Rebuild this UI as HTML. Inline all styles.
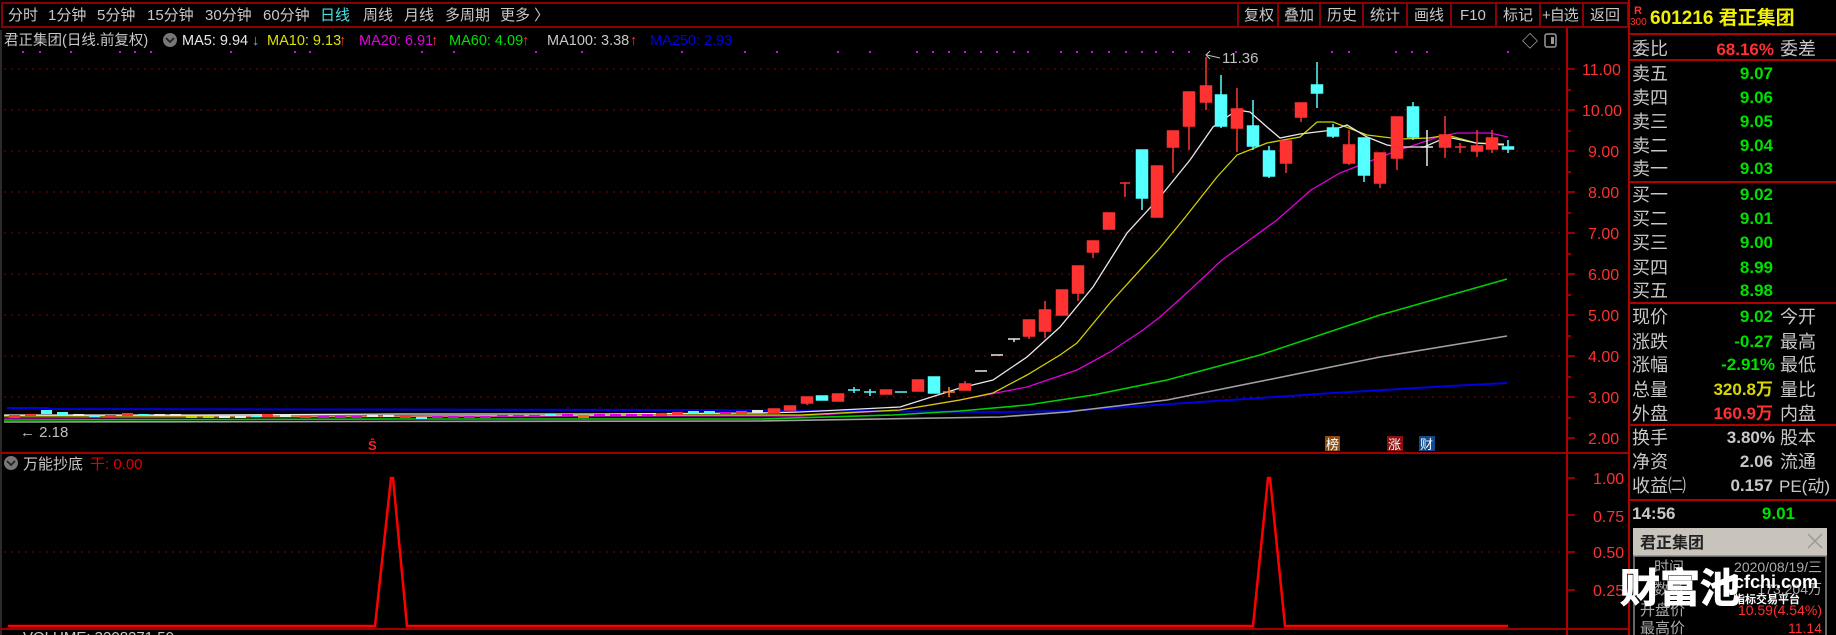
<!DOCTYPE html>
<html><head><meta charset="utf-8"><style>
html,body{margin:0;padding:0;background:#000;width:1836px;height:635px;overflow:hidden}
svg text{font-family:"Liberation Sans","Noto Sans CJK SC",sans-serif}
</style></head><body>
<svg width="1836" height="635" viewBox="0 0 1836 635" xmlns="http://www.w3.org/2000/svg">
<rect width="1836" height="635" fill="#000"/>
<rect x="2" y="3" width="1626" height="24" fill="none" stroke="#8b0000" stroke-width="2"/>
<g font-size="15" fill="#c8c8c8">
<text x="8" y="20">分时</text><text x="48" y="20">1分钟</text><text x="97" y="20">5分钟</text><text x="147" y="20">15分钟</text><text x="205" y="20">30分钟</text><text x="263" y="20">60分钟</text><text x="320" y="20" fill="#4ae0e0">日线</text><text x="363" y="20">周线</text><text x="404" y="20">月线</text><text x="445" y="20">多周期</text><text x="500" y="20">更多 〉</text>
</g>
<g stroke="#8b0000" stroke-width="2"><line x1="1238" y1="3" x2="1238" y2="27"/><line x1="1278" y1="3" x2="1278" y2="27"/><line x1="1320" y1="3" x2="1320" y2="27"/><line x1="1363" y1="3" x2="1363" y2="27"/><line x1="1407" y1="3" x2="1407" y2="27"/><line x1="1451" y1="3" x2="1451" y2="27"/><line x1="1496" y1="3" x2="1496" y2="27"/><line x1="1540" y1="3" x2="1540" y2="27"/><line x1="1583" y1="3" x2="1583" y2="27"/></g>
<g font-size="15" fill="#c8c8c8">
<text x="1244" y="20">复权</text><text x="1284" y="20">叠加</text><text x="1327" y="20">历史</text><text x="1370" y="20">统计</text><text x="1414" y="20">画线</text><text x="1460" y="20">F10</text><text x="1503" y="20">标记</text><text x="1542" y="20" letter-spacing="-1">+自选</text><text x="1590" y="20">返回</text>
</g>
<g font-size="14.5">
<text x="4" y="45" fill="#c8c8c8">君正集团(日线.前复权)</text>
<circle cx="170" cy="40" r="7" fill="#777"/><path d="M166 38 L170 42 L174 38" stroke="#222" stroke-width="1.8" fill="none"/>
<text x="182" y="45" fill="#e8e8e8">MA5: 9.94</text><text x="252" y="45" fill="#30c8e0">↓</text>
<text x="267" y="45" fill="#e0e000">MA10: 9.13</text><text x="339" y="45" fill="#ff3030">↑</text>
<text x="359" y="45" fill="#e000e0">MA20: 6.91</text><text x="431" y="45" fill="#ff3030">↑</text>
<text x="449" y="45" fill="#00e000">MA60: 4.09</text><text x="522" y="45" fill="#ff3030">↑</text>
<text x="547" y="45" fill="#c8c8c8">MA100: 3.38</text><text x="630" y="45" fill="#ff3030">↑</text>
<text x="650" y="45" fill="#0000e0">MA250: 2.93</text>
</g>
<g fill="#e000e0">
<rect x="22" y="51" width="2" height="2"/><rect x="39" y="51" width="2" height="2"/><rect x="70" y="51" width="2" height="2"/><rect x="119" y="51" width="2" height="2"/><rect x="134" y="51" width="2" height="2"/><rect x="150" y="51" width="2" height="2"/><rect x="230" y="51" width="2" height="2"/><rect x="294" y="51" width="2" height="2"/><rect x="309" y="51" width="2" height="2"/><rect x="421" y="51" width="2" height="2"/><rect x="453" y="51" width="2" height="2"/><rect x="535" y="51" width="2" height="2"/><rect x="581" y="51" width="2" height="2"/><rect x="681" y="51" width="2" height="2"/><rect x="744" y="51" width="2" height="2"/><rect x="776" y="51" width="2" height="2"/><rect x="837" y="51" width="2" height="2"/><rect x="869" y="51" width="2" height="2"/>
<rect x="916" y="51" width="2" height="2"/><rect x="932" y="51" width="2" height="2"/><rect x="948" y="51" width="2" height="2"/><rect x="964" y="51" width="2" height="2"/><rect x="980" y="51" width="2" height="2"/><rect x="996" y="51" width="2" height="2"/><rect x="1013" y="51" width="2" height="2"/><rect x="1027" y="51" width="2" height="2"/><rect x="1060" y="51" width="2" height="2"/><rect x="1076" y="51" width="2" height="2"/><rect x="1091" y="51" width="2" height="2"/><rect x="1108" y="51" width="2" height="2"/><rect x="1125" y="51" width="2" height="2"/><rect x="1141" y="51" width="2" height="2"/><rect x="1155" y="51" width="2" height="2"/><rect x="1172" y="51" width="2" height="2"/><rect x="1188" y="51" width="2" height="2"/><rect x="1235" y="51" width="2" height="2"/><rect x="1331" y="51" width="2" height="2"/><rect x="1348" y="51" width="2" height="2"/><rect x="1395" y="51" width="2" height="2"/><rect x="1411" y="51" width="2" height="2"/><rect x="1426" y="51" width="2" height="2"/><rect x="1507" y="51" width="2" height="2"/>
</g>
<text x="1522" y="47" fill="#bbb" font-size="16">◇</text>
<rect x="1545" y="34" width="11" height="13" rx="2" fill="none" stroke="#999" stroke-width="1.5"/><rect x="1551" y="37" width="3" height="7" fill="#999"/>
<g stroke="#8b0000" stroke-width="1" stroke-dasharray="2,5">
<line x1="4" y1="69" x2="1565" y2="69"/><line x1="4" y1="110" x2="1565" y2="110"/><line x1="4" y1="151" x2="1565" y2="151"/><line x1="4" y1="192" x2="1565" y2="192"/><line x1="4" y1="233" x2="1565" y2="233"/><line x1="4" y1="274" x2="1565" y2="274"/><line x1="4" y1="315" x2="1565" y2="315"/><line x1="4" y1="356" x2="1565" y2="356"/><line x1="4" y1="397" x2="1565" y2="397"/>
<line x1="4" y1="552" x2="1565" y2="552"/>
</g>
<line x1="1" y1="30" x2="1" y2="635" stroke="#555"/>
<line x1="1567" y1="28" x2="1567" y2="635" stroke="#b00000" stroke-width="2"/>
<line x1="0" y1="453" x2="1628" y2="453" stroke="#a00000" stroke-width="2"/>
<line x1="0" y1="629" x2="1628" y2="629" stroke="#a00000" stroke-width="2"/>
<line x1="1629" y1="0" x2="1629" y2="635" stroke="#b00000" stroke-width="2"/>
<g font-size="16" fill="#ff3030">
<text x="1582" y="75">11.00</text><text x="1582" y="116">10.00</text><text x="1588" y="157">9.00</text><text x="1588" y="198">8.00</text><text x="1588" y="239">7.00</text><text x="1588" y="280">6.00</text><text x="1588" y="321">5.00</text><text x="1588" y="362">4.00</text><text x="1588" y="403">3.00</text><text x="1588" y="444">2.00</text>
<text x="1593" y="484">1.00</text><text x="1593" y="522">0.75</text><text x="1593" y="558">0.50</text><text x="1593" y="596">0.25</text>
</g>
<g stroke="#c00000" stroke-width="1.5">
<line x1="1567" y1="69" x2="1575" y2="69"/><line x1="1567" y1="110" x2="1575" y2="110"/><line x1="1567" y1="151" x2="1575" y2="151"/><line x1="1567" y1="192" x2="1575" y2="192"/><line x1="1567" y1="233" x2="1575" y2="233"/><line x1="1567" y1="274" x2="1575" y2="274"/><line x1="1567" y1="315" x2="1575" y2="315"/><line x1="1567" y1="356" x2="1575" y2="356"/><line x1="1567" y1="397" x2="1575" y2="397"/><line x1="1567" y1="438" x2="1575" y2="438"/>
<line x1="1567" y1="90" x2="1571" y2="90"/><line x1="1567" y1="131" x2="1571" y2="131"/><line x1="1567" y1="172" x2="1571" y2="172"/><line x1="1567" y1="213" x2="1571" y2="213"/><line x1="1567" y1="254" x2="1571" y2="254"/><line x1="1567" y1="295" x2="1571" y2="295"/><line x1="1567" y1="336" x2="1571" y2="336"/><line x1="1567" y1="377" x2="1571" y2="377"/><line x1="1567" y1="418" x2="1571" y2="418"/>
<line x1="1567" y1="478" x2="1575" y2="478"/><line x1="1567" y1="515" x2="1575" y2="515"/><line x1="1567" y1="552" x2="1575" y2="552"/><line x1="1567" y1="590" x2="1575" y2="590"/>
</g>
<g fill="none" stroke-width="1.3">
<polyline stroke="#0000e0" stroke-width="2" points="7,408 48,408 50,409 700,410 1000,412 1067,411 1200,402 1333,393 1450,386 1507,383"/>
<polyline stroke="#a0a0a0" stroke-width="1.6" points="4,422 760,421 1000,417 1067,412 1100,408 1167,400 1267,380 1380,357 1507,336"/>
<polyline stroke="#00d000" stroke-width="1.6" points="4,420 400,419 760,419 893,415 960,411 1027,405 1093,395 1167,380 1260,355 1380,315 1507,279"/>
<polyline stroke="#e000e0" points="4,418 300,417 600,416 800,416 900,410 960,400 1027,387 1077,370 1110,352 1143,330 1160,317 1190,290 1222,260 1277,220 1311,190 1340,173 1391,153 1438,137 1457,133 1490,133 1508,137"/>
<polyline stroke="#d0d000" points="4,416 400,416 700,415 800,415 900,410 960,400 993,393 1027,375 1060,355 1077,343 1110,303 1160,248 1183,220 1217,177 1237,155 1267,143 1300,137 1317,122 1333,122 1367,135 1400,139 1429,138 1447,135 1476,143 1504,144"/>
<polyline stroke="#e8e8e8" points="4,415 200,415 400,414 600,414 760,413 800,412 900,407 960,388 993,380 1027,357 1060,327 1093,287 1127,233 1160,197 1190,160 1213,127 1237,110 1250,112 1267,127 1280,138 1300,134 1333,130 1347,125 1367,137 1387,145 1400,147 1424,147 1447,137 1476,143 1504,145"/>
</g>
<g>
<rect x="9" y="415" width="11" height="3" fill="#ff3232"/><rect x="25" y="414" width="11" height="2" fill="#ff3232"/><rect x="41" y="410" width="11" height="4" fill="#54ffff"/><rect x="57" y="412" width="11" height="3" fill="#54ffff"/><rect x="73" y="414" width="11" height="2" fill="#e8e8e8"/><rect x="89" y="415" width="11" height="2" fill="#54ffff"/><rect x="105" y="415" width="11" height="2" fill="#ff3232"/><rect x="122" y="413" width="11" height="3" fill="#ff3232"/><rect x="138" y="414" width="11" height="2" fill="#54ffff"/><rect x="154" y="414" width="11" height="2" fill="#e8e8e8"/><rect x="170" y="414" width="11" height="2" fill="#e8e8e8"/><rect x="186" y="416" width="11" height="2" fill="#d0d000"/><rect x="203" y="416" width="11" height="2" fill="#d0d000"/><rect x="219" y="416" width="11" height="2" fill="#e8e8e8"/><rect x="235" y="416" width="11" height="2" fill="#e8e8e8"/><rect x="251" y="415" width="11" height="2" fill="#54ffff"/><rect x="262" y="414" width="11" height="3" fill="#ff3232"/><rect x="280" y="415" width="11" height="2" fill="#e8e8e8"/><rect x="300" y="416" width="11" height="2" fill="#ff3232"/><rect x="318" y="416" width="11" height="2" fill="#e000e0"/><rect x="335" y="416" width="11" height="2" fill="#e000e0"/><rect x="351" y="416" width="11" height="2" fill="#e000e0"/><rect x="367" y="415" width="11" height="2" fill="#e8e8e8"/><rect x="383" y="415" width="11" height="2" fill="#e8e8e8"/><rect x="400" y="415" width="11" height="3" fill="#ff3232"/><rect x="416" y="417" width="11" height="2" fill="#54ffff"/><rect x="432" y="416" width="11" height="2" fill="#e000e0"/><rect x="448" y="416" width="11" height="2" fill="#e000e0"/><rect x="464" y="416" width="11" height="2" fill="#e000e0"/><rect x="480" y="416" width="11" height="2" fill="#e000e0"/><rect x="497" y="415" width="11" height="2" fill="#e000e0"/><rect x="513" y="415" width="11" height="2" fill="#e000e0"/><rect x="529" y="415" width="11" height="2" fill="#e000e0"/><rect x="545" y="414" width="11" height="2" fill="#54ffff"/><rect x="562" y="414" width="11" height="2" fill="#e000e0"/><rect x="578" y="415" width="11" height="3" fill="#ff6020"/><rect x="594" y="414" width="11" height="2" fill="#e000e0"/><rect x="610" y="414" width="11" height="2" fill="#e000e0"/><rect x="626" y="414" width="11" height="2" fill="#e000e0"/><rect x="642" y="414" width="11" height="2" fill="#e000e0"/><rect x="656" y="413" width="11" height="3" fill="#ff3232"/><rect x="672" y="412" width="11" height="3" fill="#ff3232"/><rect x="688" y="411" width="11" height="3" fill="#54ffff"/><rect x="704" y="411" width="11" height="3" fill="#54ffff"/><rect x="720" y="412" width="11" height="2" fill="#e000e0"/><rect x="736" y="411" width="11" height="3" fill="#ff3232"/><rect x="752" y="410" width="11" height="3" fill="#e8e8e8"/>
</g>
<g stroke-width="1.5">
<g fill="#ff3232" stroke="#ff3232">
<rect x="768.5" y="409" width="11" height="4"/><rect x="784.5" y="406" width="11" height="4"/><rect x="801.5" y="397" width="11" height="6"/><line x1="807" y1="403" x2="807" y2="405"/><rect x="832.5" y="394" width="11" height="7"/><rect x="880.5" y="390" width="11" height="4"/>
<rect x="912.5" y="380" width="11" height="11"/><rect x="959.5" y="384" width="11" height="6"/><line x1="965" y1="381" x2="965" y2="384"/>
<rect x="1023.5" y="320" width="11" height="16"/><line x1="1029" y1="336" x2="1029" y2="339"/>
<rect x="1039.5" y="310" width="11" height="21"/><line x1="1045" y1="301" x2="1045" y2="338"/>
<rect x="1056.5" y="290" width="11" height="25"/>
<rect x="1072.5" y="266" width="11" height="27"/><line x1="1078" y1="293" x2="1078" y2="301"/>
<rect x="1087.5" y="241" width="11" height="11"/><line x1="1093" y1="252" x2="1093" y2="258"/>
<rect x="1103.5" y="213" width="11" height="16"/>
<line x1="1120" y1="183" x2="1130" y2="183"/><line x1="1125" y1="183" x2="1125" y2="197"/>
<rect x="1151.5" y="166" width="11" height="51"/>
<rect x="1167.5" y="131" width="11" height="16"/><line x1="1173" y1="147" x2="1173" y2="173"/>
<rect x="1183.5" y="92" width="11" height="34"/><line x1="1189" y1="126" x2="1189" y2="150"/>
<line x1="1206" y1="57" x2="1206" y2="110"/><rect x="1200.5" y="86" width="11" height="16"/>
<line x1="1237" y1="88" x2="1237" y2="152"/><rect x="1231.5" y="109" width="11" height="19"/>
<rect x="1280.5" y="141" width="11" height="22"/><line x1="1286" y1="163" x2="1286" y2="173"/>
<rect x="1295.5" y="103" width="11" height="14"/><line x1="1301" y1="117" x2="1301" y2="122"/>
<line x1="1349" y1="130" x2="1349" y2="165"/><rect x="1343.5" y="145" width="11" height="18"/>
<rect x="1374.5" y="153" width="11" height="30"/><line x1="1380" y1="183" x2="1380" y2="188"/>
<line x1="1397" y1="158" x2="1397" y2="170"/><rect x="1391.5" y="117" width="11" height="41"/>
<line x1="1445" y1="116" x2="1445" y2="158"/><rect x="1439.5" y="135" width="11" height="12"/>
<line x1="1455" y1="147" x2="1466" y2="147"/><line x1="1460" y1="143" x2="1460" y2="153"/>
<line x1="1477" y1="130" x2="1477" y2="157"/><rect x="1471.5" y="146" width="11" height="5"/>
<line x1="1492" y1="130" x2="1492" y2="153"/><rect x="1486.5" y="138" width="11" height="11"/>
</g>
<g fill="#54ffff" stroke="#54ffff">
<rect x="816.5" y="396" width="11" height="4"/><line x1="848" y1="390" x2="860" y2="390"/><line x1="854" y1="387" x2="854" y2="393"/>
<line x1="864" y1="392" x2="876" y2="392"/><line x1="870" y1="389" x2="870" y2="396"/><line x1="895" y1="392" x2="907" y2="392"/>
<rect x="928.5" y="377" width="11" height="16"/>
<line x1="1142" y1="198" x2="1142" y2="210"/><rect x="1136.5" y="150" width="11" height="48"/>
<line x1="1221" y1="75" x2="1221" y2="128"/><rect x="1215.5" y="95" width="11" height="31"/>
<line x1="1253" y1="100" x2="1253" y2="150"/><rect x="1247.5" y="126" width="11" height="20"/>
<line x1="1269" y1="146" x2="1269" y2="178"/><rect x="1263.5" y="151" width="11" height="25"/>
<line x1="1317" y1="62" x2="1317" y2="108"/><rect x="1311.5" y="85" width="11" height="8"/>
<line x1="1333" y1="124" x2="1333" y2="138"/><rect x="1327.5" y="128" width="11" height="8"/>
<line x1="1364" y1="175" x2="1364" y2="182"/><rect x="1358.5" y="138" width="11" height="37"/>
<line x1="1413" y1="102" x2="1413" y2="140"/><rect x="1407.5" y="107" width="11" height="30"/>
<line x1="1508" y1="140" x2="1508" y2="153"/><rect x="1502.5" y="147" width="11" height="2"/>
</g>
<g stroke="#e8e8e8">
<line x1="975" y1="371" x2="987" y2="371"/><line x1="991" y1="355" x2="1003" y2="355"/><line x1="1008" y1="339" x2="1020" y2="339"/><line x1="1014" y1="339" x2="1014" y2="342"/>
<line x1="1421" y1="147" x2="1433" y2="147"/><line x1="1427" y1="130" x2="1427" y2="166"/>
</g>
<g stroke="#ff8020"><line x1="943" y1="392" x2="955" y2="392"/><line x1="949" y1="387" x2="949" y2="397"/></g>
</g>
<text x="1222" y="63" fill="#c0c0c0" font-size="15">11.36</text>
<path d="M1207 55 L1220 58" stroke="#c0c0c0" fill="none"/><path d="M1210 51 L1206 55 L1210 59" stroke="#c0c0c0" fill="none"/>
<text x="20" y="437" fill="#c0c0c0" font-size="15">← 2.18</text>
<text x="368" y="450" fill="#ff2020" font-size="13" font-weight="bold">Ŝ</text>
<rect x="1325" y="436" width="15" height="15" fill="#8a4a10"/><text x="1326" y="449" fill="#fff" font-size="13">榜</text>
<rect x="1387" y="436" width="16" height="15" fill="#8a1010"/><text x="1388" y="449" fill="#fff" font-size="13">涨</text>
<rect x="1419" y="436" width="16" height="15" fill="#104a8a"/><text x="1420" y="449" fill="#fff" font-size="13">财</text>
<circle cx="11" cy="463" r="7" fill="#777"/><path d="M7 461 L11 465 L15 461" stroke="#222" stroke-width="1.8" fill="none"/>
<text x="23" y="469" fill="#c8c8c8" font-size="15">万能抄底</text>
<text x="90" y="469" fill="#e00000" font-size="15">干: 0.00</text>
<polyline fill="none" stroke="#ff0000" stroke-width="2.5" points="8,626 375,626 391,478 393,478 407,626 1253,626 1268,478 1270,478 1285,626 1508,626"/>
<text x="23" y="642" fill="#c8c8c8" font-size="15">VOLUME: 3208271.50</text>
<text x="1634" y="14" fill="#ff3030" font-size="11" font-weight="bold">R</text>
<text x="1630" y="25" fill="#ff3030" font-size="10">300</text>
<text x="1650" y="24" fill="#f0f000" font-size="19" font-weight="bold">601216 君正集团</text>
<g stroke="#b00000" stroke-width="2"><line x1="1629" y1="34" x2="1836" y2="34"/><line x1="1629" y1="60" x2="1836" y2="60"/><line x1="1629" y1="182" x2="1836" y2="182"/><line x1="1629" y1="303" x2="1836" y2="303"/><line x1="1629" y1="425" x2="1836" y2="425"/><line x1="1629" y1="500" x2="1836" y2="500"/></g>
<g font-size="18" fill="#c8c8c8">
<text x="1632" y="55">委比</text><text x="1780" y="55">委差</text>
<text x="1632" y="80">卖五</text><text x="1632" y="104">卖四</text><text x="1632" y="128">卖三</text><text x="1632" y="152">卖二</text><text x="1632" y="175">卖一</text>
<text x="1632" y="201">买一</text><text x="1632" y="225">买二</text><text x="1632" y="249">买三</text><text x="1632" y="274">买四</text><text x="1632" y="297">买五</text>
<text x="1632" y="323">现价</text><text x="1632" y="348">涨跌</text><text x="1632" y="371">涨幅</text><text x="1632" y="396">总量</text><text x="1632" y="420">外盘</text>
<text x="1780" y="323">今开</text><text x="1780" y="348">最高</text><text x="1780" y="371">最低</text><text x="1780" y="396">量比</text><text x="1780" y="420">内盘</text>
<text x="1632" y="444">换手</text><text x="1632" y="468">净资</text><text x="1632" y="492">收益㈡</text>
<text x="1780" y="444">股本</text><text x="1780" y="468">流通</text><text x="1779" y="492" font-size="17">PE(动)</text>
</g>
<g font-size="17" font-weight="bold" text-anchor="end">
<text x="1774" y="55" fill="#ff3030">68.16%</text>
<g fill="#00e000"><text x="1773" y="79">9.07</text><text x="1773" y="103">9.06</text><text x="1773" y="127">9.05</text><text x="1773" y="151">9.04</text><text x="1773" y="174">9.03</text><text x="1773" y="200">9.02</text><text x="1773" y="224">9.01</text><text x="1773" y="248">9.00</text><text x="1773" y="273">8.99</text><text x="1773" y="296">8.98</text>
<text x="1773" y="322">9.02</text><text x="1773" y="347">-0.27</text><text x="1775" y="370">-2.91%</text></g>
<text x="1773" y="395" fill="#d8d800">320.8万</text><text x="1773" y="419" fill="#ff3030">160.9万</text>
<g fill="#c8c8c8"><text x="1775" y="443">3.80%</text><text x="1773" y="467">2.06</text><text x="1773" y="491">0.157</text></g>
<text x="1795" y="519" fill="#00e000">9.01</text>
</g>
<text x="1632" y="519" fill="#c8c8c8" font-size="17" font-weight="bold">14:56</text>
<rect x="1633" y="528" width="194" height="28" fill="#c8c4bc"/>
<text x="1640" y="548" fill="#222" font-size="16" font-weight="bold">君正集团</text>
<path d="M1808 534 L1822 548 M1822 534 L1808 548" stroke="#999" stroke-width="1.5"/>
<rect x="1634" y="556" width="192" height="80" fill="#000" stroke="#888" stroke-width="1.5"/>
<g font-size="15" fill="#aaa"><text x="1654" y="572">时间</text><text x="1654" y="594">数量</text><text x="1640" y="615">开盘价</text><text x="1640" y="633">最高价</text></g>
<g font-size="14" text-anchor="end"><text x="1822" y="572" fill="#aaa">2020/08/19/三</text><text x="1822" y="594" fill="#aaa">173.204万</text><text x="1822" y="615" fill="#ff3030">10.59(4.54%)</text><text x="1822" y="633" fill="#ff3030">11.14</text></g>
<text x="1620" y="602" fill="#fff" font-size="40" font-weight="bold" stroke="#fff" stroke-width="1">财富池</text>
<text x="1734" y="588" fill="#fff" font-size="18" font-weight="bold">cfchi.com</text>
<text x="1734" y="603" fill="#fff" font-size="11" font-weight="bold">指标交易平台</text>
</svg>
</body></html>
